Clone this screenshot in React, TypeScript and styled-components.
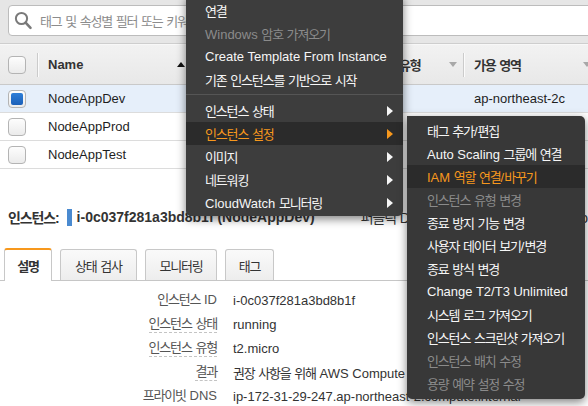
import React from "react";
import styled, { createGlobalStyle } from "styled-components";

const GlobalStyle = createGlobalStyle`
  html, body { margin: 0; padding: 0; background: #fff; }
  body {
    font-family: "Liberation Sans", "Noto Sans CJK KR", sans-serif;
    font-size: 13px;
    color: #222;
  }
  * { box-sizing: border-box; }
`;

const Ko = styled.span`
  letter-spacing: -1.15px;
`;

const Txt = styled.span`
  white-space: pre;
`;

function T({ children }: { children: string }) {
  const parts = children.split(/([\uAC00-\uD7A3]+)/);
  return (
    <Txt>
      {parts.map((p, i) =>
        /[\uAC00-\uD7A3]/.test(p) ? <Ko key={i}>{p}</Ko> : <React.Fragment key={i}>{p}</React.Fragment>
      )}
    </Txt>
  );
}

const Page = styled.div`
  position: relative;
  width: 588px;
  height: 406px;
  overflow: hidden;
  background: #fff;
`;

const TopBar = styled.div`
  height: 44px;
  background: #e6e6e6;
  border-bottom: 1px solid #cecece;
  padding: 5px 0 0 8px;
  display: flex;
`;

const SearchBox = styled.div`
  flex: none;
  width: 620px;
  height: 31px;
  background: #fff;
  border: 1px solid #bcbcbc;
  border-radius: 4px;
  display: flex;
  align-items: center;
  gap: 6px;
  padding-left: 5px;
  color: #8c8c8c;
`;

const HeaderRow = styled.div`
  display: flex;
  height: 41px;
  background: linear-gradient(#f2f2f2, #e8e8e8);
  border-top: 1px solid #f8f8f8;
  border-bottom: 1px solid #c9c9c9;
`;

const HeadCell = styled.div<{ $w: number; $pl?: number; $pr?: number }>`
  flex: none;
  width: ${(p) => p.$w}px;
  padding-left: ${(p) => p.$pl ?? 0}px;
  padding-right: ${(p) => p.$pr ?? 0}px;
  display: flex;
  align-items: center;
  font-weight: bold;
  color: #333;
  white-space: nowrap;
  overflow: hidden;
`;

const ColDivider = styled.div`
  flex: none;
  align-self: center;
  width: 2px;
  height: 24px;
  border-left: 1px solid #cbcbcb;
  border-right: 1px solid #fbfbfb;
`;

const SortIcon = styled.svg`
  flex: none;
  margin-left: auto;
`;

const Row = styled.div<{ $selected?: boolean }>`
  display: flex;
  height: 28px;
  background: ${(p) => (p.$selected ? "#e6effa" : "#fff")};
  border-bottom: 1px solid #dcdcdc;
`;

const Cell = styled.div<{ $w?: number; $pl?: number }>`
  flex: ${(p) => (p.$w ? "none" : "1")};
  width: ${(p) => (p.$w ? `${p.$w}px` : "auto")};
  padding-left: ${(p) => p.$pl ?? 0}px;
  display: flex;
  align-items: center;
  white-space: nowrap;
  overflow: hidden;
  color: #1e1e1e;
`;

const Check = styled.div<{ $on?: boolean }>`
  flex: none;
  width: 18px;
  height: 18px;
  border: 1px solid #b4b4b4;
  border-radius: 4px;
  background: linear-gradient(#fdfdfd, #ebebeb);
  padding: 2px;
  &::after {
    content: "";
    display: ${(p) => (p.$on ? "block" : "none")};
    width: 100%;
    height: 100%;
    border-radius: 2px;
    background: linear-gradient(#2f7fd8, #1a5fb8);
  }
`;

const Detail = styled.div`
  margin-top: 38px;
`;

const TitleRow = styled.div`
  height: 20px;
  display: flex;
  align-items: center;
  padding-left: 8px;
  font-size: 14px;
  font-weight: bold;
  color: #333;
  white-space: nowrap;
`;

const BlueMark = styled.span`
  flex: none;
  display: inline-block;
  width: 5px;
  height: 17px;
  background: #4a8ad0;
  margin: 0 5px 0 7px;
`;

const PublicDns = styled.span`
  margin-left: 46px;
  font-weight: normal;
`;

const TabBar = styled.div`
  margin-top: 21px;
  height: 33px;
  display: flex;
  align-items: flex-end;
  gap: 8px;
  padding-left: 4px;
  border-bottom: 1px solid #c6c6c6;
`;

const Tab = styled.div<{ $active?: boolean; $w: number }>`
  flex: none;
  width: ${(p) => p.$w}px;
  height: ${(p) => (p.$active ? 33 : 31)}px;
  margin-bottom: ${(p) => (p.$active ? -1 : 0)}px;
  display: flex;
  align-items: center;
  justify-content: center;
  border: 1px solid #c8c8c8;
  border-bottom: none;
  border-top: ${(p) => (p.$active ? "2px solid #f7981d" : "1px solid #c8c8c8")};
  border-radius: 3px 3px 0 0;
  background: ${(p) => (p.$active ? "#fff" : "linear-gradient(#fafafa, #ededed)")};
  font-weight: ${(p) => (p.$active ? "bold" : "normal")};
  color: #333;
`;

const DetailList = styled.div`
  padding-top: 7px;
`;

const DetailRow = styled.div`
  display: flex;
  height: 24px;
  align-items: center;
  gap: 16px;
  white-space: nowrap;
`;

const Label = styled.div`
  flex: none;
  width: 217px;
  text-align: right;
  color: #555;
`;

const LabelText = styled.span<{ $tip?: boolean }>`
  display: inline-block;
  line-height: 17px;
  border-bottom: 1px dashed ${(p) => (p.$tip ? "#c4c4c4" : "transparent")};
`;

const Value = styled.div`
  color: #333;
`;

const Menu = styled.div<{ $left: number; $top: number; $w: number; $bg: string }>`
  position: absolute;
  left: ${(p) => p.$left}px;
  top: ${(p) => p.$top}px;
  width: ${(p) => p.$w}px;
  background: ${(p) => p.$bg};
  border-radius: 5px;
  box-shadow: 0 3px 10px rgba(0, 0, 0, 0.5);
`;

const Menu1 = styled(Menu)`
  padding: 5px 0 2px;
`;

const Menu2 = styled(Menu)`
  padding: 3px 0 4px;
  border-top-left-radius: 0;
`;

type ItemState = "normal" | "disabled" | "active";

const MenuItem = styled.div<{ $state?: ItemState; $pl: number }>`
  height: 23px;
  display: flex;
  align-items: center;
  padding-left: ${(p) => p.$pl}px;
  padding-right: 10px;
  white-space: nowrap;
  color: ${(p) =>
    p.$state === "disabled" ? "#8b8b8b" : p.$state === "active" ? "#f7981d" : "#f6f6f6"};
  background: ${(p) => (p.$state === "active" ? "#2b2b2b" : "transparent")};
`;

const Arrow = styled.svg`
  flex: none;
  margin-left: auto;
`;

const Separator = styled.div`
  height: 1px;
  margin: 3px 0 4px;
  background: #555;
`;

function Caret({ color }: { color: string }) {
  return (
    <Arrow width="6" height="10" viewBox="0 0 6 10">
      <polygon points="0,0 6,5 0,10" fill={color} />
    </Arrow>
  );
}

function Tri({ up, color }: { up?: boolean; color: string }) {
  return (
    <SortIcon width="8" height="5" viewBox="0 0 8 5">
      <polygon points={up ? "0,5 4,0 8,5" : "0,0 8,0 4,5"} fill={color} />
    </SortIcon>
  );
}

const rows = [
  { name: "NodeAppDev", id: "i-0c037f281a3bd8b1f", type: "t2.micro", az: "ap-northeast-2c", sel: true },
  { name: "NodeAppProd", id: "i-0a91f3c2b7d4e6a10", type: "t2.micro", az: "ap-northeast-2a", sel: false },
  { name: "NodeAppTest", id: "i-05d7e2a8c1b9f3d42", type: "t2.micro", az: "ap-northeast-2a", sel: false },
];

const details: { label: string; value: string; tip?: boolean }[] = [
  { label: "인스턴스 ID", value: "i-0c037f281a3bd8b1f" },
  { label: "인스턴스 상태", value: "running", tip: true },
  { label: "인스턴스 유형", value: "t2.micro", tip: true },
  { label: "결과", value: "권장 사항을 위해 AWS Compute Optimizer에 옵트인", tip: true },
  { label: "프라이빗 DNS", value: "ip-172-31-29-247.ap-northeast-2.compute.internal" },
];

const menu1a: { text: string; state?: ItemState }[] = [
  { text: "연결" },
  { text: "Windows 암호 가져오기", state: "disabled" },
  { text: "Create Template From Instance" },
  { text: "기존 인스턴스를 기반으로 시작" },
];

const menu1b: { text: string; state?: ItemState }[] = [
  { text: "인스턴스 상태" },
  { text: "인스턴스 설정", state: "active" },
  { text: "이미지" },
  { text: "네트워킹" },
  { text: "CloudWatch 모니터링" },
];

const menu2: { text: string; state?: ItemState }[] = [
  { text: "태그 추가/편집" },
  { text: "Auto Scaling 그룹에 연결" },
  { text: "IAM 역할 연결/바꾸기", state: "active" },
  { text: "인스턴스 유형 변경", state: "disabled" },
  { text: "종료 방지 기능 변경" },
  { text: "사용자 데이터 보기/변경" },
  { text: "종료 방식 변경" },
  { text: "Change T2/T3 Unlimited" },
  { text: "시스템 로그 가져오기" },
  { text: "인스턴스 스크린샷 가져오기" },
  { text: "인스턴스 배치 수정", state: "disabled" },
  { text: "용량 예약 설정 수정", state: "disabled" },
];

export default function App() {
  return (
    <Page>
      <GlobalStyle />
      <TopBar>
        <SearchBox>
          <svg width="20" height="20" viewBox="0 0 20 20">
            <circle cx="7.5" cy="7.5" r="5.6" fill="none" stroke="#7a7a7a" strokeWidth="2" />
            <line x1="11.6" y1="11.6" x2="16.5" y2="16.8" stroke="#7a7a7a" strokeWidth="2.6" strokeLinecap="round" />
          </svg>
          <T>태그 및 속성별 필터 또는 키워드별 검색</T>
        </SearchBox>
      </TopBar>

      <HeaderRow>
        <HeadCell $w={37} $pl={8}>
          <Check />
        </HeadCell>
        <ColDivider />
        <HeadCell $w={154} $pl={9} $pr={8}>
          Name
          <Tri up color="#111" />
        </HeadCell>
        <ColDivider />
        <HeadCell $w={144} $pl={9} $pr={6}>
          <T>인스턴스 ID</T>
          <Tri color="#a8a8a8" />
        </HeadCell>
        <ColDivider />
        <HeadCell $w={122} $pl={11} $pr={6}>
          <T>인스턴스 유형</T>
          <Tri color="#a8a8a8" />
        </HeadCell>
        <ColDivider />
        <HeadCell $w={130} $pl={9} $pr={4}>
          <T>가용 영역</T>
          <Tri color="#a8a8a8" />
        </HeadCell>
      </HeaderRow>

      {rows.map((r) => (
        <Row key={r.name} $selected={r.sel}>
          <Cell $w={39} $pl={8}>
            <Check $on={r.sel} />
          </Cell>
          <Cell $w={156} $pl={9}>{r.name}</Cell>
          <Cell $w={146} $pl={9}>{r.id}</Cell>
          <Cell $w={124} $pl={11}>{r.type}</Cell>
          <Cell $pl={9}>{r.az}</Cell>
        </Row>
      ))}

      <Detail>
        <TitleRow>
          <T>인스턴스:</T>
          <BlueMark />
          i-0c037f281a3bd8b1f (NodeAppDev)
          <PublicDns>
            <T>퍼블릭 DNS: ec2-13-125-10-21.ap-northeast-2.compute.amazonaws.com</T>
          </PublicDns>
        </TitleRow>
        <TabBar>
          <Tab $active $w={48}><T>설명</T></Tab>
          <Tab $w={77}><T>상태 검사</T></Tab>
          <Tab $w={72}><T>모니터링</T></Tab>
          <Tab $w={49}><T>태그</T></Tab>
        </TabBar>
        <DetailList>
          {details.map((d) => (
            <DetailRow key={d.label}>
              <Label>
                <LabelText $tip={d.tip}>
                  <T>{d.label}</T>
                </LabelText>
              </Label>
              <Value>
                <T>{d.value}</T>
              </Value>
            </DetailRow>
          ))}
        </DetailList>
      </Detail>

      <Menu1 $left={186} $top={-6} $w={217} $bg="#3d3d3d">
        {menu1a.map((m) => (
          <MenuItem key={m.text} $state={m.state} $pl={19}>
            <T>{m.text}</T>
          </MenuItem>
        ))}
        <Separator />
        {menu1b.map((m) => (
          <MenuItem key={m.text} $state={m.state} $pl={19}>
            <T>{m.text}</T>
            <Caret color={m.state === "active" ? "#f7981d" : "#f6f6f6"} />
          </MenuItem>
        ))}
      </Menu1>

      <Menu2 $left={407} $top={116} $w={178} $bg="#383838">
        {menu2.map((m) => (
          <MenuItem key={m.text} $state={m.state} $pl={20}>
            <T>{m.text}</T>
          </MenuItem>
        ))}
      </Menu2>
    </Page>
  );
}
